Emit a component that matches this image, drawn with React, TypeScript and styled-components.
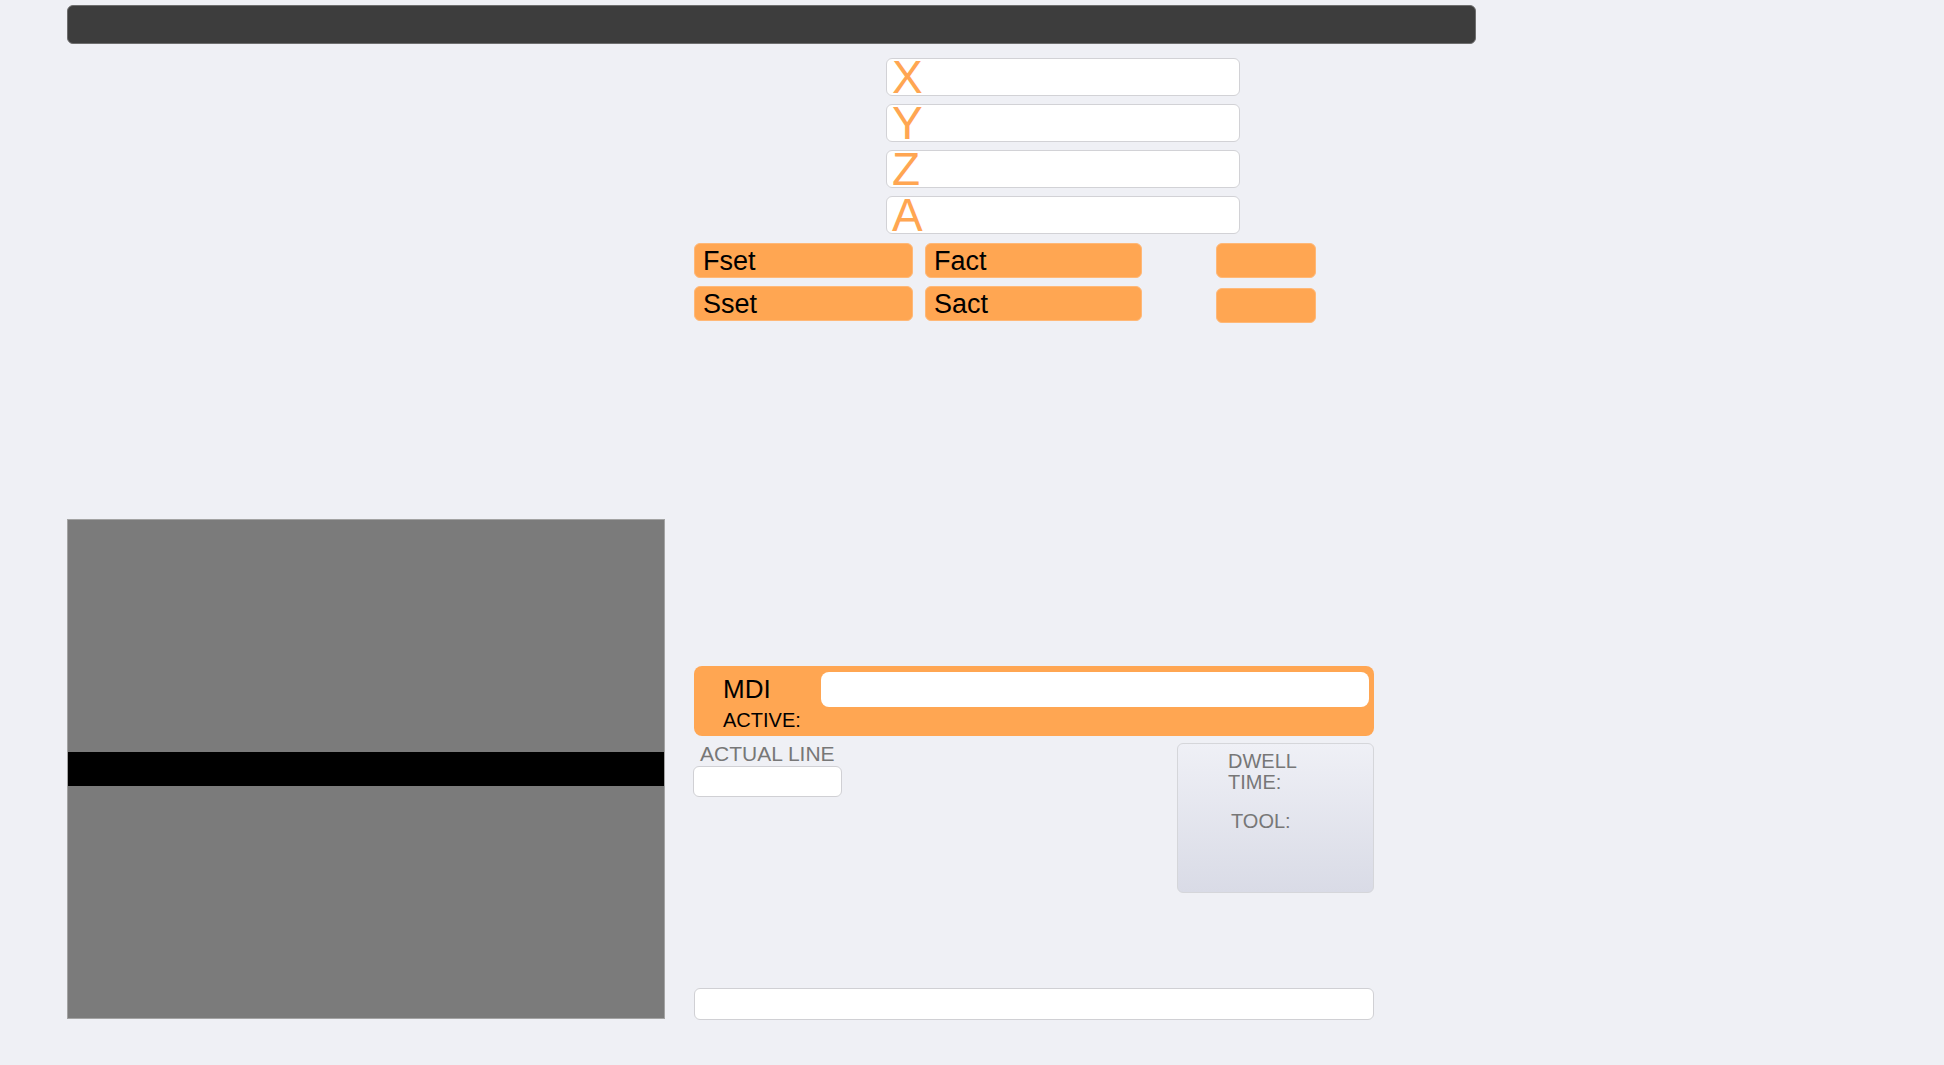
import { FC } from 'react';
import styled, { createGlobalStyle } from 'styled-components';

const ORANGE = '#ffa652';

const GlobalStyle = createGlobalStyle`
    html, body {
        margin: 0;
        padding: 0;
        background: #eff0f5;
        font-family: "Liberation Sans", Arial, sans-serif;
    }
`

const Page = styled.div`
    width: 1944px;
    height: 1065px;
    padding-left: 67px;
    box-sizing: border-box;
    overflow: hidden;
`

const TopBar = styled.header`
    margin-top: 5px;
    width: 1409px;
    height: 39px;
    box-sizing: border-box;
    background: #3d3d3d;
    border: 1px solid #6e6e6e;
    border-radius: 6px;
`

const Main = styled.div`
    display: grid;
    grid-template-columns: 598px 680px;
    column-gap: 29px;
    align-items: start;
`

const Viewer = styled.div`
    margin-top: 475px;
    height: 500px;
    box-sizing: border-box;
    background: #7b7b7b;
    border: 1px solid #a3a3a3;
    display: flex;
    flex-direction: column;
`

const ViewerBand = styled.div`
    margin-top: 232px;
    height: 34px;
    background: #000;
`

const Controls = styled.div`
    display: flex;
    flex-direction: column;
`

const AxisList = styled.div`
    margin: 14px 0 0 192px;
    width: 354px;
    display: flex;
    flex-direction: column;
    gap: 8px;
`

const AxisBox = styled.div`
    height: 38px;
    box-sizing: border-box;
    background: #fff;
    border: 1px solid #d2d2d6;
    border-radius: 6px;
    padding-left: 5px;
    color: ${ORANGE};
    font-size: 46px;
    line-height: 37px;
    overflow: visible;
`

const FeedGrid = styled.div`
    margin-top: 9px;
    display: flex;
    flex-direction: column;
    gap: 8px;
`

const FeedRow = styled.div`
    display: flex;
    align-items: flex-start;
    gap: 12px;
    height: 35px;
`

const FeedBox = styled.div<{ $w: number; $shift?: number; $drop?: number }>`
    width: ${p => p.$w}px;
    height: 35px;
    box-sizing: border-box;
    margin-left: ${p => p.$shift ?? 0}px;
    margin-top: ${p => p.$drop ?? 0}px;
    background: ${ORANGE};
    border: 1px solid #ffb877;
    border-radius: 6px;
    padding-left: 8px;
    font-size: 27px;
    line-height: 34px;
    color: #000;
`

const MdiPanel = styled.div`
    margin-top: 345px;
    height: 70px;
    box-sizing: border-box;
    background: ${ORANGE};
    border-radius: 8px;
    display: grid;
    grid-template-columns: 127px 1fr;
    padding: 6px 5px 0 0;
`

const MdiLabels = styled.div`
    padding: 2px 0 0 29px;
    display: flex;
    flex-direction: column;
    gap: 5px;
    color: #000;
`

const MdiTitle = styled.span`
    font-size: 26px;
    line-height: 30px;
`

const MdiActive = styled.span`
    font-size: 20px;
    line-height: 22px;
`

const MdiInput = styled.div`
    height: 35px;
    background: #fff;
    border-radius: 8px;
`

const InfoRow = styled.div`
    margin-top: 7px;
    display: flex;
    justify-content: space-between;
    align-items: flex-start;
`

const LineBlock = styled.div`
    display: flex;
    flex-direction: column;
    margin-left: -1px;
`

const GreyLabel = styled.span`
    color: #777;
    font-size: 21px;
    line-height: 22px;
    padding-left: 7px;
`

const TextField = styled.div<{ $w?: number; $h: number }>`
    width: ${p => (p.$w ? `${p.$w}px` : 'auto')};
    height: ${p => p.$h}px;
    box-sizing: border-box;
    background: #fff;
    border: 1px solid #d0d0d4;
    border-radius: 6px;
`

const LineField = styled(TextField)`
    margin-top: 1px;
`

const DwellCard = styled.div`
    width: 197px;
    height: 150px;
    box-sizing: border-box;
    border: 1px solid #d5d6da;
    border-radius: 6px;
    background: linear-gradient(#eff0f6, #d9dbe6);
    padding: 7px 0 0 50px;
    color: #777;
    font-size: 20px;
    line-height: 21px;
`

const DwellText = styled.div<{ $indent?: number; $gap?: number }>`
    margin-left: ${p => p.$indent ?? 0}px;
    margin-top: ${p => p.$gap ?? 0}px;
`

const BottomField = styled(TextField)`
    margin-top: 95px;
`

const AXES = ['X', 'Y', 'Z', 'A'];

const App: FC = () => {
    return (
        <Page>
            <GlobalStyle />
            <TopBar />
            <Main>
                <Viewer>
                    <ViewerBand />
                </Viewer>

                <Controls>
                    <AxisList>
                        {AXES.map(axis => <AxisBox key={axis}>{axis}</AxisBox>)}
                    </AxisList>

                    <FeedGrid>
                        <FeedRow>
                            <FeedBox $w={219}>Fset</FeedBox>
                            <FeedBox $w={217}>Fact</FeedBox>
                            <FeedBox $w={100} $shift={62} />
                        </FeedRow>
                        <FeedRow>
                            <FeedBox $w={219}>Sset</FeedBox>
                            <FeedBox $w={217}>Sact</FeedBox>
                            <FeedBox $w={100} $shift={62} $drop={2} />
                        </FeedRow>
                    </FeedGrid>

                    <MdiPanel>
                        <MdiLabels>
                            <MdiTitle>MDI</MdiTitle>
                            <MdiActive>ACTIVE:</MdiActive>
                        </MdiLabels>
                        <MdiInput />
                    </MdiPanel>

                    <InfoRow>
                        <LineBlock>
                            <GreyLabel>ACTUAL LINE</GreyLabel>
                            <LineField $w={149} $h={31} />
                        </LineBlock>
                        <DwellCard>
                            <DwellText>DWELL<br />TIME:</DwellText>
                            <DwellText $indent={3} $gap={18}>TOOL:</DwellText>
                        </DwellCard>
                    </InfoRow>

                    <BottomField $h={32} />
                </Controls>
            </Main>
        </Page>
    )
}

export default App
